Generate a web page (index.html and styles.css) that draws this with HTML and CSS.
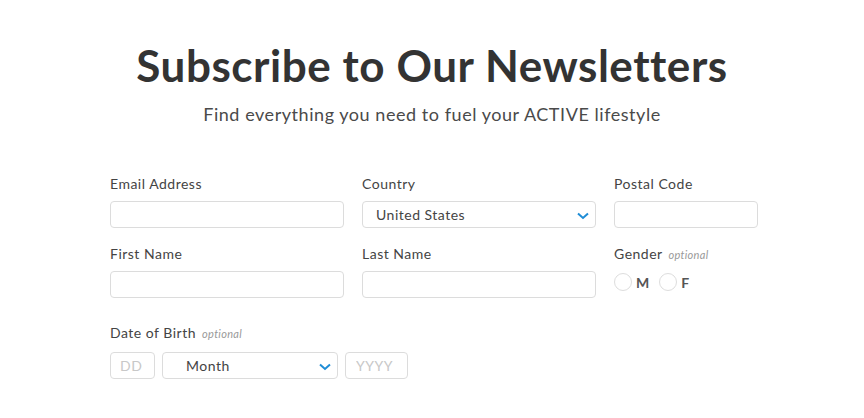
FILE: index.html
```html
<!DOCTYPE html>
<html>
<head>
    <title>Subscribe to Our Newsletters</title>
    <link rel="stylesheet" href="styles.css">
</head>
<body>
    <div class="page">
        <div class="intro">
            <h1>Subscribe to Our Newsletters</h1>
            <p>Find everything you need to fuel your ACTIVE lifestyle</p>
        </div>
        <form class="signup">
            <div class="field">
                <label>Email Address</label>
                <input type="text" class="text-input">
            </div>
            <div class="field">
                <label>Country</label>
                <div class="select-wrap">
                    <select class="select-input country">
                        <option>United States</option>
                    </select>
                    <svg class="chevron" width="12" height="8" viewBox="0 0 12 8"><path d="M1 1.5 L6 6 L11 1.5" fill="none" stroke="#1f8dd6" stroke-width="2"/></svg>
                </div>
            </div>
            <div class="field">
                <label>Postal Code</label>
                <input type="text" class="text-input">
            </div>
            <div class="field">
                <label>First Name</label>
                <input type="text" class="text-input">
            </div>
            <div class="field">
                <label>Last Name</label>
                <input type="text" class="text-input">
            </div>
            <div class="field">
                <label>Gender <span class="optional">optional</span></label>
                <div class="radios">
                    <span class="radio"><span class="circle"></span>M</span>
                    <span class="radio"><span class="circle"></span>F</span>
                </div>
            </div>
            <div class="field birth">
                <label>Date of Birth <span class="optional">optional</span></label>
                <div class="date-row">
                    <input type="text" class="text-input day" placeholder="DD">
                    <div class="select-wrap month-wrap">
                        <select class="select-input month">
                            <option>Month</option>
                        </select>
                        <svg class="chevron" width="12" height="8" viewBox="0 0 12 8"><path d="M1 1.5 L6 6 L11 1.5" fill="none" stroke="#1f8dd6" stroke-width="2"/></svg>
                    </div>
                    <input type="text" class="text-input year" placeholder="YYYY">
                </div>
            </div>
        </form>
    </div>
</body>
</html>
```

FILE: styles.css
```css
body {
    margin: 0;
    background-color: #fff;
    color: #333;
    font-family: Lato, "Open Sans", sans-serif;
}

.intro {
    text-align: center;
    padding-top: 38px;
}

.intro h1 {
    margin: 0;
    font-size: 44px;
    line-height: 54px;
    font-weight: 700;
    letter-spacing: 0.55px;
    color: #333;
}

.intro p {
    margin: 10px 0 0;
    font-size: 18px;
    line-height: 24px;
    letter-spacing: 0.55px;
    color: #4a4a4a;
}

.signup {
    width: 648px;
    margin: 0 auto;
    padding: 50px 0 0 4px;
    display: grid;
    grid-template-columns: 234px 234px 144px;
    column-gap: 18px;
    row-gap: 18px;
}

.field label {
    display: block;
    font-size: 14px;
    line-height: 16px;
    letter-spacing: 0.5px;
    margin-bottom: 9px;
    color: #444;
}

.optional {
    font-size: 11px;
    font-style: italic;
    letter-spacing: 0.3px;
    color: #999;
    margin-left: 2px;
}

.text-input,
.select-input {
    box-sizing: border-box;
    display: block;
    width: 100%;
    height: 27px;
    margin: 0;
    border: 1px solid #dcdcdc;
    border-radius: 4px;
    background: #fff;
    font-family: Lato, "Open Sans", sans-serif;
    font-size: 14px;
    letter-spacing: 0.5px;
    color: #444;
    outline: none;
}

.text-input {
    padding: 0 10px;
}

.text-input::placeholder {
    color: #c8c8c8;
}

.select-input {
    -webkit-appearance: none;
    appearance: none;
    padding: 0 30px 0 13px;
}

.select-input.month {
    padding-left: 23px;
}

.select-wrap {
    position: relative;
}

.chevron {
    position: absolute;
    right: 7px;
    top: 11px;
}

.radios {
    display: flex;
    gap: 10px;
    padding-top: 1px;
}

.radio {
    display: flex;
    align-items: center;
    gap: 4px;
    font-size: 14px;
    font-weight: 700;
    color: #555;
}

.circle {
    box-sizing: border-box;
    width: 18px;
    height: 18px;
    border: 1px solid #ddd;
    border-radius: 50%;
}

.birth {
    grid-column: 1 / 4;
    margin-top: 9px;
}

.field.birth label {
    margin-bottom: 10px;
}

.date-row {
    display: flex;
    gap: 7px;
}

.date-row .day {
    width: 45px;
    padding: 0 9px;
}

.month-wrap {
    width: 176px;
}

.date-row .year {
    width: 63px;
}
```
